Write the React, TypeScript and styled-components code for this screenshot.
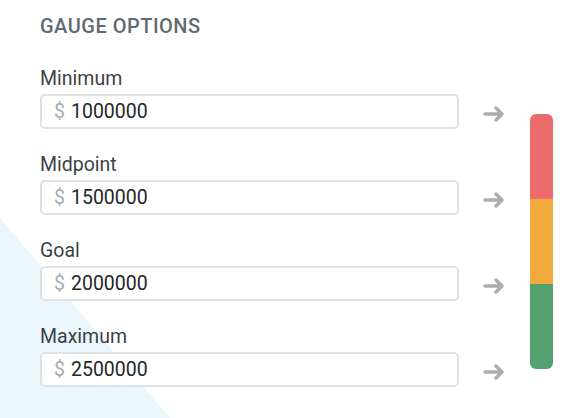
import React from "react";
import styled, { createGlobalStyle } from "styled-components";

const Global = createGlobalStyle`
  html, body { margin: 0; padding: 0; background: #ffffff; }
  body { font-family: Roboto, "Liberation Sans", sans-serif; }
`;

const Page = styled.div`
  position: relative;
  width: 582px;
  height: 418px;
  overflow: hidden;
  box-sizing: border-box;
  padding: 14px 0 0 40px;
  display: flex;
  background: linear-gradient(to top right, #ebf5fc 50%, transparent 50%) no-repeat left bottom / 170px 200px;
`;

const Fields = styled.div`
  display: flex;
  flex-direction: column;
`;

const Title = styled.h2`
  margin: 0 0 30px;
  font-size: 20px;
  line-height: 24px;
  font-weight: 500;
  color: #5f6a71;
  letter-spacing: 0.5px;
  text-transform: uppercase;
`;

const List = styled.div`
  display: flex;
  flex-direction: column;
  gap: 25px;
`;

const Field = styled.div`
  display: flex;
  flex-direction: column;
  gap: 4px;
`;

const Label = styled.label`
  font-size: 19.5px;
  line-height: 22px;
  color: #3b4247;
`;

const Row = styled.div`
  display: flex;
  align-items: center;
`;

const InputBox = styled.div`
  width: 419px;
  height: 35px;
  box-sizing: border-box;
  border: 2px solid #dfe2e5;
  border-radius: 5px;
  background: #ffffff;
  display: flex;
  align-items: center;
  padding-left: 12px;
  gap: 6px;
`;

const Dollar = styled.span`
  font-size: 19.5px;
  color: #a6adb3;
`;

const Value = styled.span`
  font-size: 19.5px;
  color: #22272b;
`;

const ArrowWrap = styled.span`
  display: flex;
  margin-left: 24px;
  margin-top: 4px;
`;

const Gauge = styled.div`
  margin: 100px 0 0 25px;
  width: 23px;
  height: 255px;
  border-radius: 6px;
  overflow: hidden;
  display: flex;
  flex-direction: column;
`;

const Segment = styled.div<{ $color: string }>`
  flex: 1;
  background: ${(p) => p.$color};
`;

const Arrow = () => (
  <svg width="22" height="16" viewBox="0 0 22 16" fill="none">
    <path
      d="M2 8 H19 M13 2 L19 8 L13 14"
      stroke="#a9aeb2"
      strokeWidth="3.5"
      strokeLinecap="round"
      strokeLinejoin="round"
    />
  </svg>
);

const fields = [
  { label: "Minimum", value: "1000000" },
  { label: "Midpoint", value: "1500000" },
  { label: "Goal", value: "2000000" },
  { label: "Maximum", value: "2500000" },
];

export default function App() {
  return (
    <Page>
      <Global />
      <Fields>
        <Title>Gauge Options</Title>
        <List>
          {fields.map((f) => (
            <Field key={f.label}>
              <Label>{f.label}</Label>
              <Row>
                <InputBox>
                  <Dollar>$</Dollar>
                  <Value>{f.value}</Value>
                </InputBox>
                <ArrowWrap>
                  <Arrow />
                </ArrowWrap>
              </Row>
            </Field>
          ))}
        </List>
      </Fields>
      <Gauge>
        <Segment $color="#ee6b6b" />
        <Segment $color="#f2aa3c" />
        <Segment $color="#55a06f" />
      </Gauge>
    </Page>
  );
}
